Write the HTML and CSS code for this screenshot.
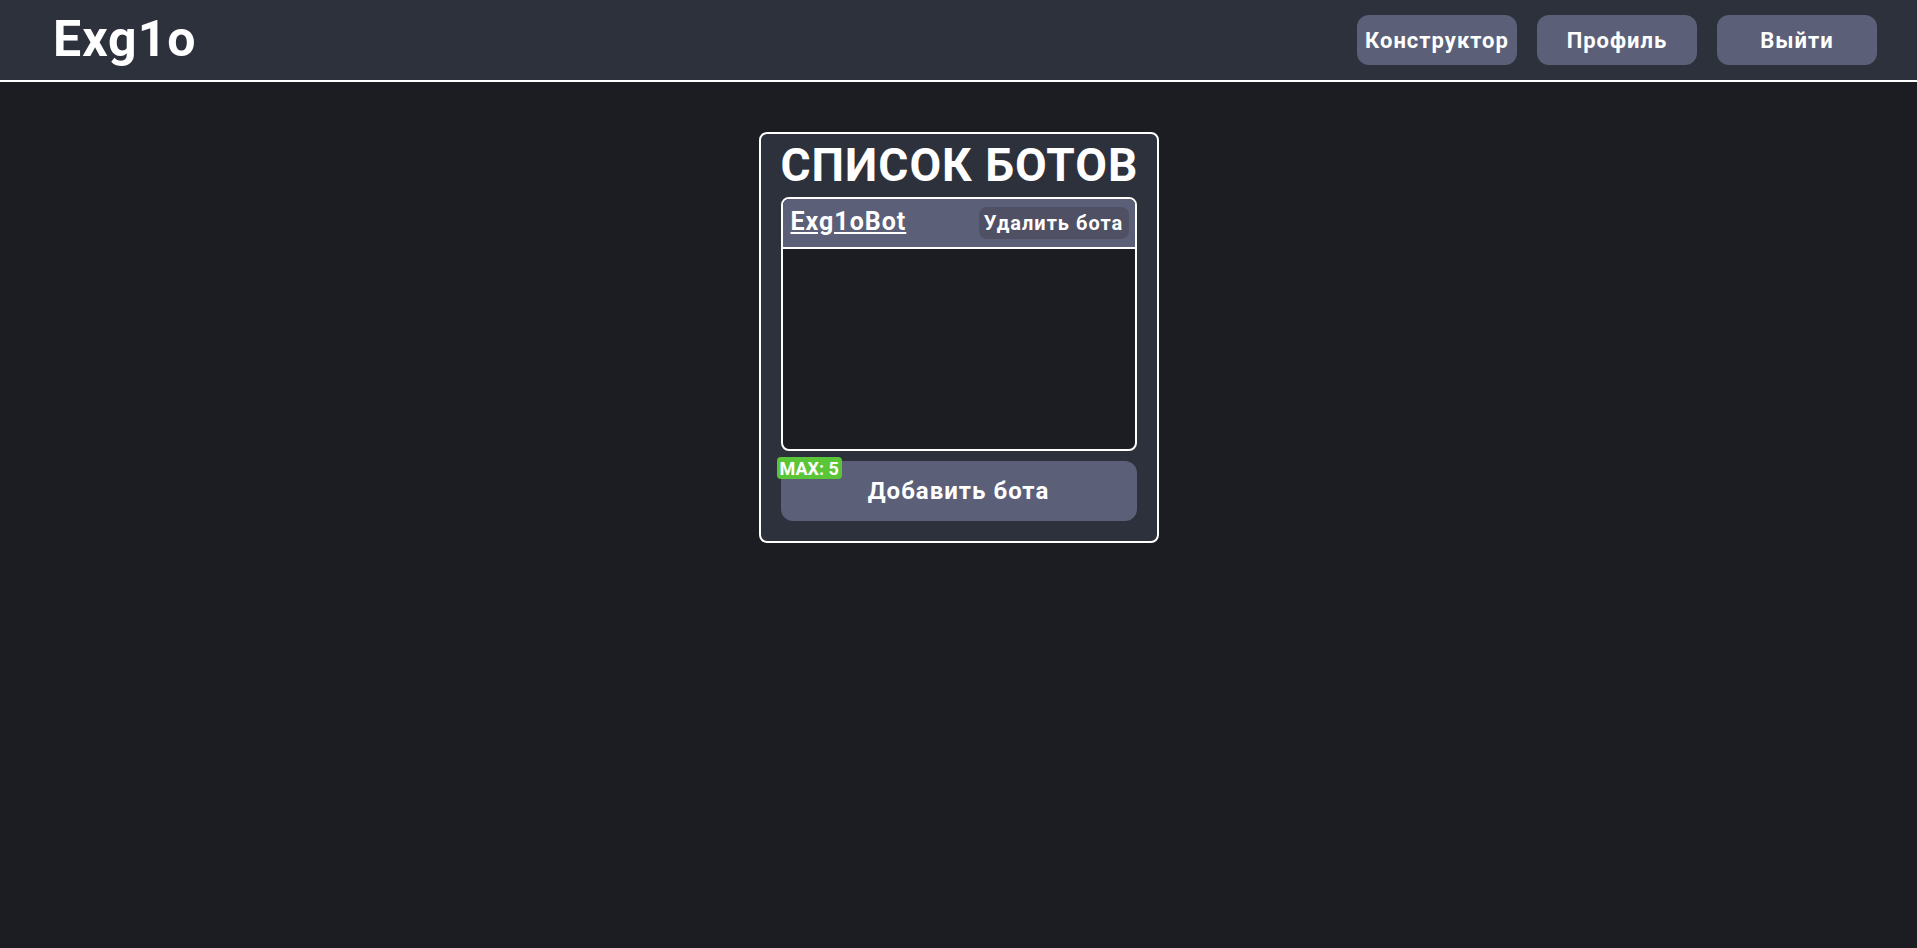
FILE: index.html
```html
<!DOCTYPE html>
<html lang="ru">
<head>
<meta charset="utf-8">
<title>Exg1o</title>
<link rel="stylesheet" href="styles.css">
</head>
<body>
<header class="header">
  <a class="logo" href="#">Exg1o</a>
  <nav class="nav">
    <button class="button nav-button" type="button">Конструктор</button>
    <button class="button nav-button" type="button">Профиль</button>
    <button class="button nav-button" type="button">Выйти</button>
  </nav>
</header>
<main class="main">
  <section class="card">
    <h1 class="title">СПИСОК БОТОВ</h1>
    <ul class="bots">
      <li class="bot">
        <a class="bot-name" href="#">Exg1oBot</a>
        <button class="button delete-button" type="button">Удалить бота</button>
      </li>
    </ul>
    <div class="add">
      <button class="button add-button" type="button">Добавить бота</button>
      <span class="badge">MAX: 5</span>
    </div>
  </section>
</main>
</body>
</html>
```
FILE: styles.css
```css
* {
  box-sizing: border-box;
}

body {
  margin: 0;
  background: #1c1d22;
  color: #fff;
  font-family: Roboto, "Liberation Sans", sans-serif;
  font-weight: 700;
  letter-spacing: 1px;
}

.header {
  display: flex;
  align-items: center;
  justify-content: space-between;
  padding: 15px 40px 15px 53px;
  background: #2d313c;
  border-bottom: 2px solid #fff;
}

.logo {
  padding-bottom: 2px;
  color: inherit;
  font-size: 50px;
  line-height: 48px;
  text-decoration: none;
}

.nav {
  display: flex;
  gap: 20px;
}

.button {
  padding: 0;
  border: 0;
  border-radius: 12px;
  background: #5b5f78;
  color: inherit;
  font: inherit;
  letter-spacing: inherit;
  cursor: pointer;
}

.nav-button {
  width: 160px;
  height: 50px;
  font-size: 22px;
}

.main {
  display: flex;
  justify-content: center;
  padding: 50px 20px;
}

.card {
  width: 400px;
  padding: 4px 20px 20px;
  background: #2d313c;
  border: 2px solid #fff;
  border-radius: 8px;
}

.title {
  margin: 0 0 4px;
  font-size: 46px;
  line-height: 55px;
  text-align: center;
  white-space: nowrap;
}

.bots {
  min-height: 254px;
  margin: 0 0 10px;
  padding: 0;
  overflow: hidden;
  background: #1c1d22;
  border: 2px solid #fff;
  border-radius: 8px;
  list-style: none;
}

.bot {
  display: flex;
  align-items: center;
  justify-content: space-between;
  padding: 8px 6px 8px 8px;
  background: #5b5f78;
  border-bottom: 2px solid #fff;
}

.bot-name {
  padding-bottom: 2px;
  color: inherit;
  font-size: 25px;
  line-height: 28px;
}

.delete-button {
  width: 150px;
  height: 32px;
  border-radius: 8px;
  background: #4f5064;
  font-size: 20px;
}

.add {
  position: relative;
}

.add-button {
  display: block;
  width: 100%;
  height: 60px;
  font-size: 24px;
}

.badge {
  position: absolute;
  top: -4px;
  left: -4px;
  padding: 2px 3px 0;
  border-radius: 4px;
  background: #5bc538;
  font-size: 18px;
  line-height: 20px;
  letter-spacing: 0;
}
```
